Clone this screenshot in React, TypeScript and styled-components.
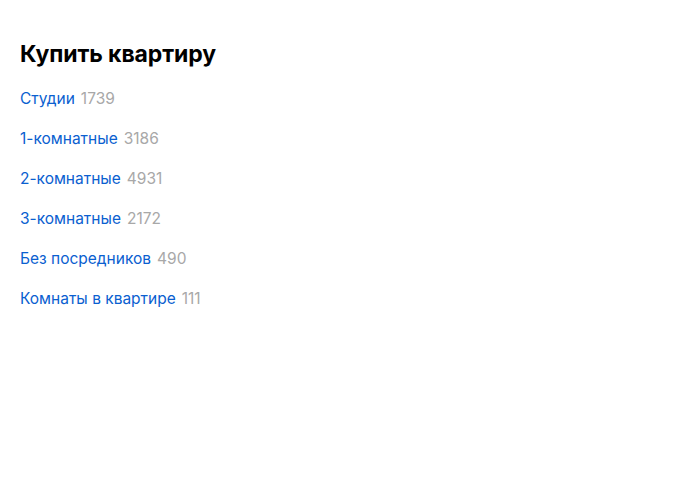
import React from "react";
import styled, { createGlobalStyle } from "styled-components";

const Global = createGlobalStyle`
  body { margin: 0; background: #fff; font-family: Inter, "Noto Sans", sans-serif; }
`;

const Wrap = styled.div`
  padding: 40px 20px;
`;

const Title = styled.h2`
  margin: 0 0 21px;
  font-size: 23px;
  font-weight: 700;
  line-height: 28px;
  color: #000;
  letter-spacing: -0.1px;
`;

const List = styled.ul`
  list-style: none;
  margin: 0;
  padding: 0;
  display: flex;
  flex-direction: column;
  gap: 20px;
`;

const Item = styled.li`
  font-size: 15.5px;
  line-height: 20px;
  display: flex;
  gap: 6px;
`;

const Link = styled.a`
  color: #0a60d0;
  text-decoration: none;
`;

const Count = styled.span`
  color: #a8a8a8;
`;

const items: [string, number][] = [
  ["Студии", 1739],
  ["1-комнатные", 3186],
  ["2-комнатные", 4931],
  ["3-комнатные", 2172],
  ["Без посредников", 490],
  ["Комнаты в квартире", 111],
];

export default function App() {
  return (
    <Wrap>
      <Global />
      <Title>Купить квартиру</Title>
      <List>
        {items.map(([n, c]) => (
          <Item key={n}>
            <Link href="#">{n}</Link>
            <Count>{c}</Count>
          </Item>
        ))}
      </List>
    </Wrap>
  );
}
